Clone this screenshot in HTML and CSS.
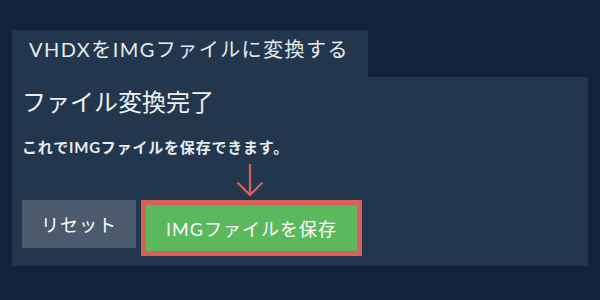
FILE: index.html
```html
<!DOCTYPE html>
<html lang="ja">
<head>
<meta charset="utf-8">
<link rel="stylesheet" href="styles.css">
</head>
<body>
<div class="page">
  <div class="tab">VHDXをIMGファイルに変換する</div>
  <div class="panel">
    <h2 class="title">ファイル変換完了</h2>
    <p class="message">これでIMGファイルを保存できます。</p>
    <div class="actions">
      <button class="btn btn-reset">リセット</button>
      <div class="save-wrap">
        <svg class="arrow" width="28" height="34" viewBox="0 0 28 34">
          <path d="M14 1 V32 M1.5 19.5 L14 32 L26.5 19.5" fill="none" stroke="#d9605a" stroke-width="2.2"/>
        </svg>
        <button class="btn btn-save">IMGファイルを保存</button>
      </div>
    </div>
  </div>
</div>
</body>
</html>
```
FILE: styles.css
```css
html, body {
  margin: 0;
  padding: 0;
  background: #11233a;
}
body {
  font-family: Lato, "Noto Sans CJK JP", sans-serif;
  color: #e9edf0;
}
.page {
  padding: 30px 12px 0 12px;
}
.tab {
  display: inline-block;
  box-sizing: border-box;
  height: 47px;
  padding: 5px 19px 0 17px;
  background: #22374d;
  font-size: 20px;
  letter-spacing: 1.45px;
  line-height: 28px;
  color: #e6eaee;
  white-space: nowrap;
}
.panel {
  background: #22374d;
  padding: 9px 10px 10px 10px;
  height: 189px;
  box-sizing: border-box;
}
.title {
  margin: 0;
  font-size: 24px;
  line-height: 32px;
  font-weight: normal;
  color: #eef1f3;
}
.message {
  margin: 19px 0 0 0;
  font-size: 15px;
  letter-spacing: 0.8px;
  line-height: 20px;
  font-weight: bold;
  color: #e9edf0;
}
.actions {
  display: flex;
  align-items: flex-start;
  gap: 5px;
  margin-top: 43px;
}
.btn {
  font-family: Lato, "Noto Sans CJK JP", sans-serif;
  font-size: 18px;
  letter-spacing: 1px;
  color: #ffffff;
  border: none;
  margin: 0;
  cursor: pointer;
}
.btn-reset {
  height: 48px;
  padding: 0 19px;
  background: #4b5b6d;
}
.save-wrap {
  position: relative;
}
.arrow {
  position: absolute;
  left: 50%;
  margin-left: -15px;
  bottom: 100%;
  margin-bottom: 3px;
}
.btn-save {
  box-sizing: content-box;
  height: 46px;
  padding: 0 20px;
  background: #5cb85c;
  border: 5px solid #d9605a;
}
```
